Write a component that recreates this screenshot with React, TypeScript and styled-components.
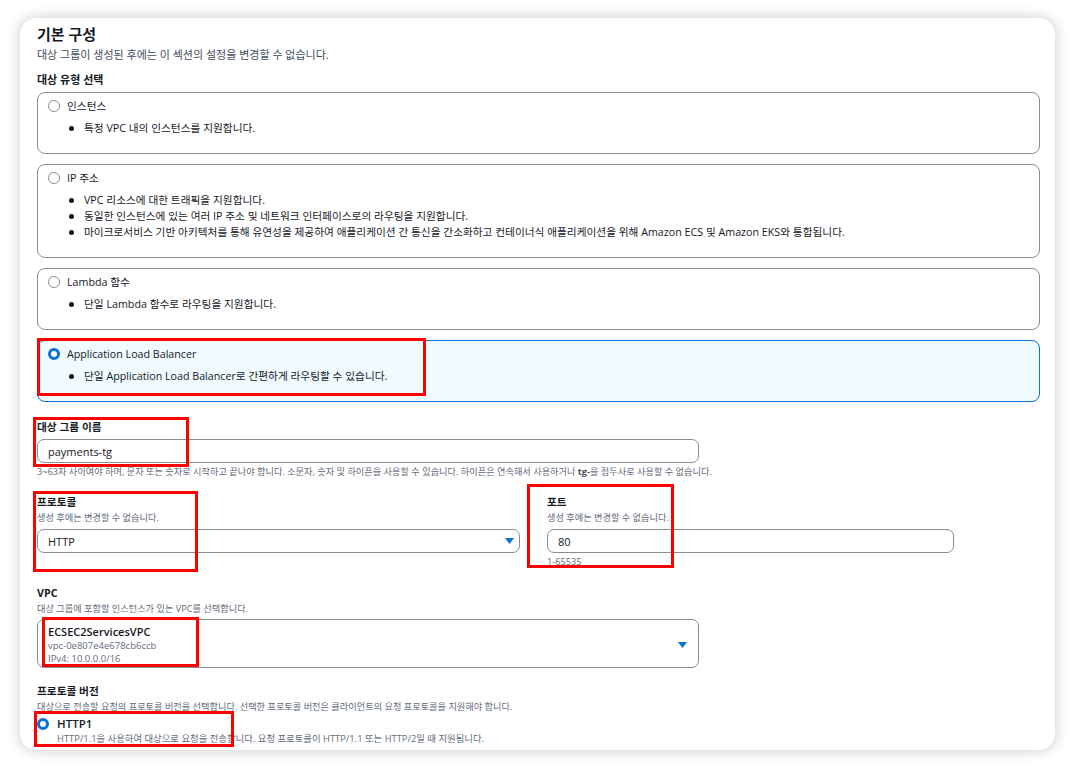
import React from 'react';
import styled, { createGlobalStyle } from 'styled-components';

const GlobalStyle = createGlobalStyle`
  body {
    margin: 0;
    background: #ffffff;
    font-family: "Open Sans", "Noto Sans CJK KR", sans-serif;
    color: #16191f;
  }
`;

type TargetType = {
  id: string;
  label: string;
  bullets: React.ReactNode[];
  selected?: boolean;
};

const targetTypes: TargetType[] = [
  {
    id: 'instance',
    label: '인스턴스',
    bullets: ['특정 VPC 내의 인스턴스를 지원합니다.'],
  },
  {
    id: 'ip',
    label: 'IP 주소',
    bullets: [
      'VPC 리소스에 대한 트래픽을 지원합니다.',
      '동일한 인스턴스에 있는 여러 IP 주소 및 네트워크 인터페이스로의 라우팅을 지원합니다.',
      '마이크로서비스 기반 아키텍처를 통해 유연성을 제공하여 애플리케이션 간 통신을 간소화하고 컨테이너식 애플리케이션을 위해 Amazon ECS 및 Amazon EKS와 통합됩니다.',
    ],
  },
  {
    id: 'lambda',
    label: 'Lambda 함수',
    bullets: ['단일 Lambda 함수로 라우팅을 지원합니다.'],
  },
  {
    id: 'alb',
    label: 'Application Load Balancer',
    bullets: ['단일 Application Load Balancer로 간편하게 라우팅할 수 있습니다.'],
    selected: true,
  },
];

// red annotation boxes drawn on top of the screenshot
const highlights = [
  { left: 17, top: 320, width: 389, height: 58 },
  { left: 13, top: 399, width: 156, height: 50 },
  { left: 13, top: 473, width: 165, height: 81 },
  { left: 507, top: 466, width: 147, height: 84 },
  { left: 22, top: 599, width: 157, height: 50 },
  { left: 14, top: 693, width: 200, height: 36 },
];

function Caret() {
  return (
    <StyledCaret width="9" height="6" viewBox="0 0 9 6">
      <path d="M0 0 H9 L4.5 6 Z" fill="#0972d3" />
    </StyledCaret>
  );
}

function App() {
  return (
    <>
      <GlobalStyle />
      <StyledPage>
        <StyledCard>
          <StyledTitle>기본 구성</StyledTitle>
          <StyledSubtitle>대상 그룹이 생성된 후에는 이 섹션의 설정을 변경할 수 없습니다.</StyledSubtitle>

          <StyledSectionLabel>대상 유형 선택</StyledSectionLabel>
          <StyledTiles>
            {targetTypes.map((t) => (
              <StyledTile key={t.id} $selected={!!t.selected}>
                <StyledRadioRow>
                  <StyledRadio $checked={!!t.selected} />
                  <span>{t.label}</span>
                </StyledRadioRow>
                <StyledBullets>
                  {t.bullets.map((b, i) => (
                    <li key={i}>{b}</li>
                  ))}
                </StyledBullets>
              </StyledTile>
            ))}
          </StyledTiles>

          <StyledField $top={17}>
            <StyledLabel>대상 그룹 이름</StyledLabel>
            <StyledInput $width={662}>payments-tg</StyledInput>
            <StyledHint>
              3~63자 사이여야 하며, 문자 또는 숫자로 시작하고 끝나야 합니다. 소문자, 숫자 및 하이픈을 사용할 수 있습니다. 하이픈은 연속해서 사용하거나 <b>tg-</b>을 접두사로 사용할 수 없습니다.
            </StyledHint>
          </StyledField>

          <StyledColumns>
            <StyledField $top={0}>
              <StyledLabel>프로토콜</StyledLabel>
              <StyledDescription>생성 후에는 변경할 수 없습니다.</StyledDescription>
              <StyledInput $width={483}>
                HTTP
                <Caret />
              </StyledInput>
            </StyledField>
            <StyledField $top={0}>
              <StyledLabel>포트</StyledLabel>
              <StyledDescription>생성 후에는 변경할 수 없습니다.</StyledDescription>
              <StyledInput $width={407}>80</StyledInput>
              <StyledHint>1-65535</StyledHint>
            </StyledField>
          </StyledColumns>

          <StyledField $top={17}>
            <StyledLabel>VPC</StyledLabel>
            <StyledDescription>대상 그룹에 포함할 인스턴스가 있는 VPC를 선택합니다.</StyledDescription>
            <StyledVpcSelect>
              <div>
                <StyledVpcName>ECSEC2ServicesVPC</StyledVpcName>
                <StyledVpcMeta>vpc-0e807e4e678cb6ccb</StyledVpcMeta>
                <StyledVpcMeta>IPv4: 10.0.0.0/16</StyledVpcMeta>
              </div>
              <Caret />
            </StyledVpcSelect>
          </StyledField>

          <StyledField $top={15}>
            <StyledLabel>프로토콜 버전</StyledLabel>
            <StyledDescription>
              대상으로 전송할 요청의 프로토콜 버전을 선택합니다. 선택한 프로토콜 버전은 클라이언트의 요청 프로토콜을 지원해야 합니다.
            </StyledDescription>
            <StyledVersionOption>
              <StyledRadio $checked />
              <div>
                <StyledVersionName>HTTP1</StyledVersionName>
                <StyledVersionText>
                  HTTP/1.1을 사용하여 대상으로 요청을 전송합니다. 요청 프로토콜이 HTTP/1.1 또는 HTTP/2일 때 지원됩니다.
                </StyledVersionText>
              </div>
            </StyledVersionOption>
          </StyledField>

          {highlights.map((h, i) => (
            <StyledHighlight key={i} $left={h.left} $top={h.top} $width={h.width} $height={h.height} />
          ))}
        </StyledCard>
      </StyledPage>
    </>
  );
}

const StyledPage = styled.div`
  padding: 18px 18px 18px 20px;
`;

const StyledCard = styled.div`
  position: relative;
  box-sizing: border-box;
  width: 1035px;
  height: 732px;
  padding: 6px 15px 0 17px;
  background: #fff;
  border-radius: 16px;
  box-shadow: 0 0 14px rgba(0, 0, 0, 0.22);
  overflow: hidden;
`;

const StyledTitle = styled.h2`
  margin: 0;
  height: 20px;
  font-size: 15px;
  line-height: 20px;
  font-weight: 700;
`;

const StyledSubtitle = styled.div`
  margin-top: 3px;
  height: 16px;
  font-size: 11px;
  line-height: 16px;
  color: #414d5c;
  white-space: nowrap;
`;

const StyledSectionLabel = styled.div`
  margin-top: 9px;
  height: 16px;
  font-size: 11px;
  line-height: 16px;
  font-weight: 700;
`;

const StyledTiles = styled.div`
  display: flex;
  flex-direction: column;
  gap: 10px;
  margin-top: 4px;
`;

const StyledTile = styled.div<{ $selected: boolean }>`
  box-sizing: border-box;
  padding: 5px 10px 17px;
  border: 1px solid ${(p) => (p.$selected ? '#0972d3' : '#8c8c94')};
  border-radius: 8px;
  background: ${(p) => (p.$selected ? '#f0fbff' : '#fff')};
  font-size: 10.7px;
`;

const StyledRadioRow = styled.div`
  display: flex;
  align-items: center;
  gap: 7px;
  height: 16px;
  line-height: 16px;
`;

const StyledRadio = styled.span<{ $checked: boolean }>`
  box-sizing: border-box;
  flex: none;
  width: 12px;
  height: 12px;
  border-radius: 50%;
  background: #fff;
  border: ${(p) => (p.$checked ? '3.5px solid #0972d3' : '1.5px solid #8c8c94')};
`;

const StyledBullets = styled.ul`
  margin: 6px 0 0;
  padding: 0 0 0 21px;
  list-style: none;

  li {
    display: flex;
    align-items: center;
    height: 16px;
    line-height: 16px;
    white-space: nowrap;
  }

  li::before {
    content: '';
    flex: none;
    width: 5px;
    height: 5px;
    margin-right: 10px;
    border-radius: 50%;
    background: #16191f;
  }
`;

const StyledField = styled.div<{ $top: number }>`
  display: flex;
  flex-direction: column;
  margin-top: ${(p) => p.$top}px;
`;

const StyledLabel = styled.div`
  height: 16px;
  font-size: 10.7px;
  line-height: 16px;
  font-weight: 700;
`;

const StyledDescription = styled.div`
  height: 15px;
  font-size: 9.2px;
  line-height: 15px;
  color: #5f6b7a;
  white-space: nowrap;
`;

const StyledInput = styled.div<{ $width: number }>`
  box-sizing: border-box;
  display: flex;
  align-items: center;
  justify-content: space-between;
  width: ${(p) => p.$width}px;
  height: 24px;
  margin-top: 4px;
  padding: 0 5px 0 10px;
  border: 1px solid #8c8c94;
  border-radius: 7px;
  font-size: 11px;
  font-weight: 500;
`;

const StyledHint = styled.div`
  margin-top: 3px;
  height: 12px;
  font-size: 9.2px;
  line-height: 12px;
  color: #5f6b7a;
  white-space: nowrap;

  b {
    color: #414d5c;
  }
`;

const StyledColumns = styled.div`
  display: grid;
  grid-template-columns: 483px 407px;
  column-gap: 27px;
  margin-top: 16px;
`;

const StyledVpcSelect = styled.div`
  box-sizing: border-box;
  display: flex;
  align-items: center;
  justify-content: space-between;
  width: 662px;
  height: 49px;
  margin-top: 3px;
  padding: 2px 11px 0 10px;
  border: 1px solid #8c8c94;
  border-radius: 7px;
`;

const StyledVpcName = styled.div`
  height: 14px;
  font-size: 11px;
  line-height: 14px;
  font-weight: 600;
`;

const StyledVpcMeta = styled.div`
  height: 13px;
  font-size: 9.5px;
  line-height: 13px;
  color: #5f6b7a;
`;

const StyledCaret = styled.svg`
  flex: none;
  display: block;
`;

const StyledVersionOption = styled.div`
  display: flex;
  align-items: flex-start;
  gap: 8px;
  margin-top: 2px;

  ${StyledRadio} {
    margin-top: 2px;
  }
`;

const StyledVersionName = styled.div`
  height: 16px;
  font-size: 11.5px;
  line-height: 16px;
  font-weight: 600;
`;

const StyledVersionText = styled.div`
  height: 14px;
  font-size: 9.4px;
  line-height: 14px;
  color: #5f6b7a;
  white-space: nowrap;
`;

const StyledHighlight = styled.div<{ $left: number; $top: number; $width: number; $height: number }>`
  position: absolute;
  left: ${(p) => p.$left}px;
  top: ${(p) => p.$top}px;
  width: ${(p) => p.$width}px;
  height: ${(p) => p.$height}px;
  box-sizing: border-box;
  border: 3px solid #ff0000;
  pointer-events: none;
`;

export default App;
